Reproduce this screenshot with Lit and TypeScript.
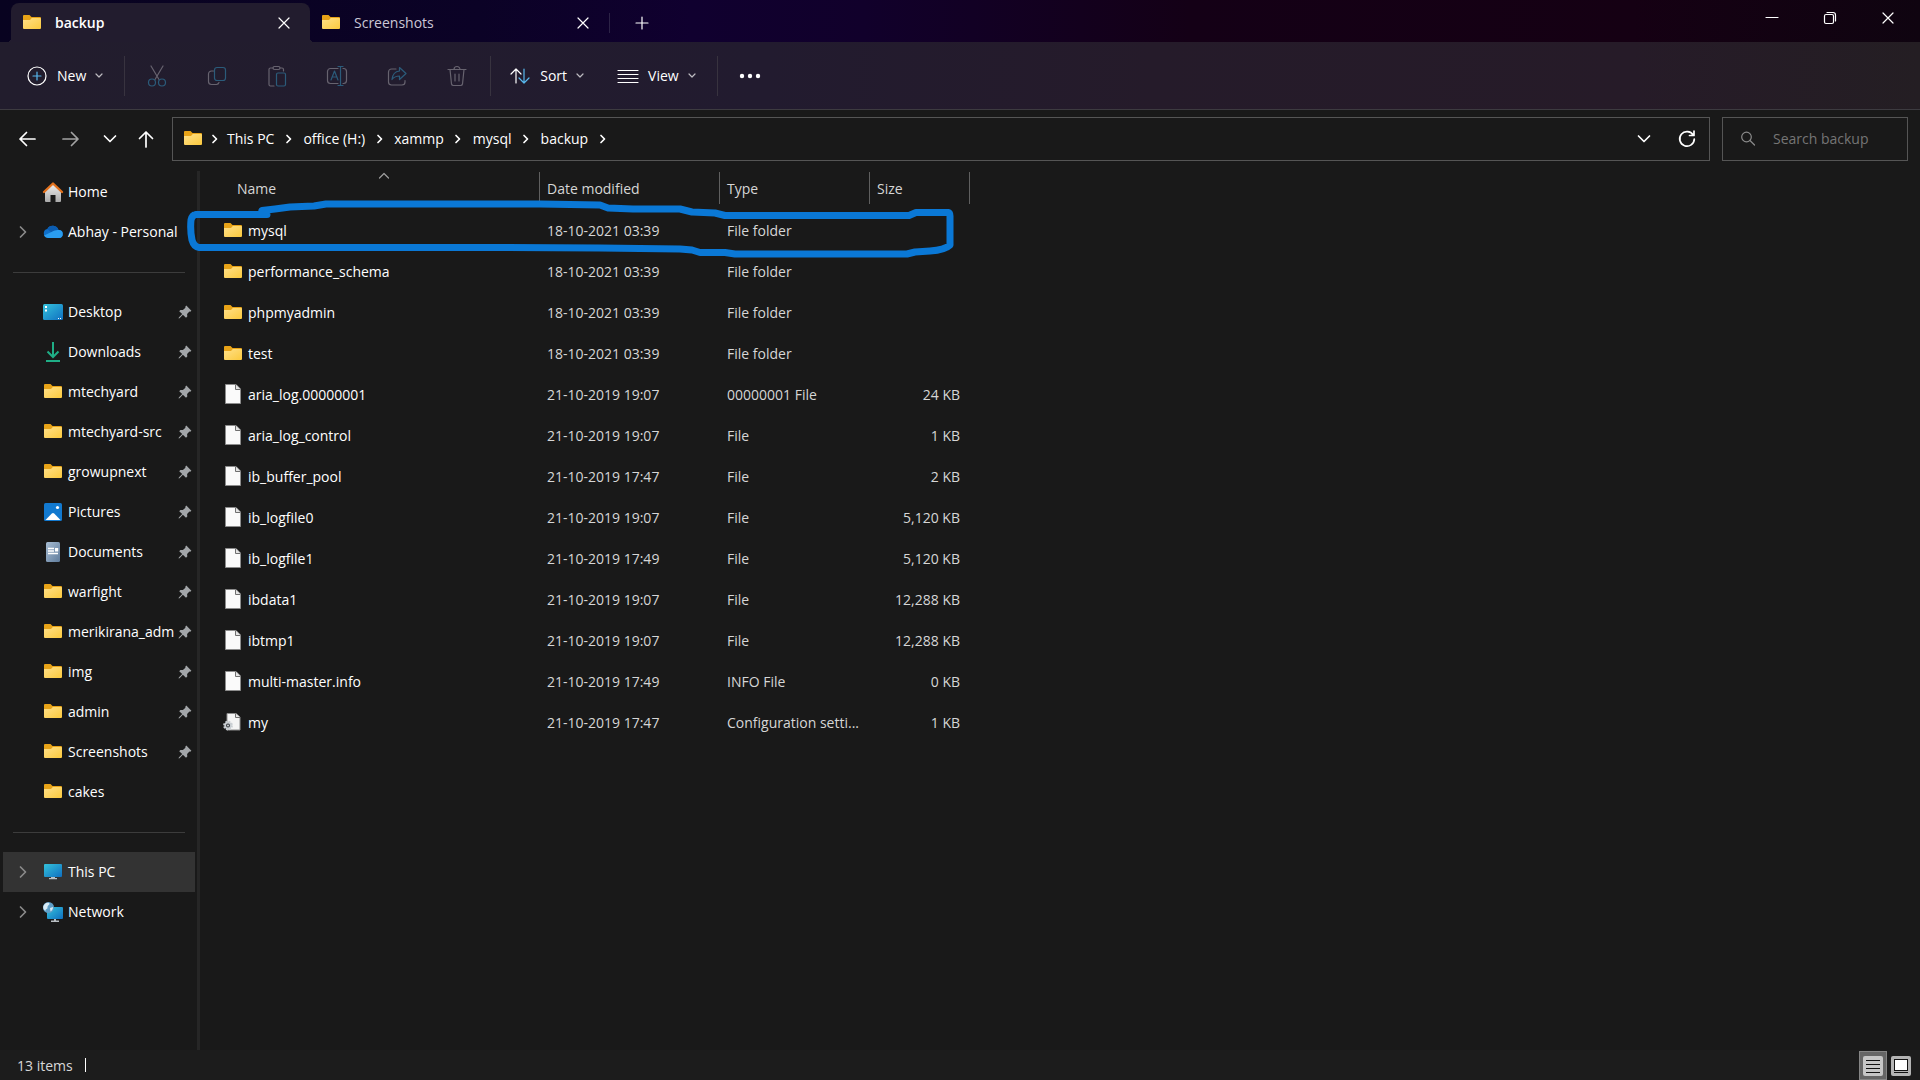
import { LitElement, html, css, svg, nothing, TemplateResult } from "lit";
import { customElement } from "lit/decorators.js";

interface Place {
  icon: string;
  label: string;
  pinned?: boolean;
  expandable?: boolean;
  selected?: boolean;
}

interface Entry {
  icon: string;
  name: string;
  modified: string;
  type: string;
  size: string;
}

const PLACES: Place[][] = [
  [
    { icon: "home", label: "Home" },
    { icon: "cloud", label: "Abhay - Personal", expandable: true },
  ],
  [
    { icon: "desktop", label: "Desktop", pinned: true },
    { icon: "downloads", label: "Downloads", pinned: true },
    { icon: "folder", label: "mtechyard", pinned: true },
    { icon: "folder", label: "mtechyard-src", pinned: true },
    { icon: "folder", label: "growupnext", pinned: true },
    { icon: "pictures", label: "Pictures", pinned: true },
    { icon: "documents", label: "Documents", pinned: true },
    { icon: "folder", label: "warfight", pinned: true },
    { icon: "folder", label: "merikirana_adm", pinned: true },
    { icon: "folder", label: "img", pinned: true },
    { icon: "folder", label: "admin", pinned: true },
    { icon: "folder", label: "Screenshots", pinned: true },
    { icon: "folder", label: "cakes" },
  ],
  [
    { icon: "pc", label: "This PC", expandable: true, selected: true },
    { icon: "network", label: "Network", expandable: true },
  ],
];

const entry = (icon: string, name: string, modified: string, type: string, size = ""): Entry => ({
  icon, name, modified, type, size,
});

const ENTRIES: Entry[] = [
  entry("folder", "mysql", "18-10-2021 03:39", "File folder"),
  entry("folder", "performance_schema", "18-10-2021 03:39", "File folder"),
  entry("folder", "phpmyadmin", "18-10-2021 03:39", "File folder"),
  entry("folder", "test", "18-10-2021 03:39", "File folder"),
  entry("file", "aria_log.00000001", "21-10-2019 19:07", "00000001 File", "24 KB"),
  entry("file", "aria_log_control", "21-10-2019 19:07", "File", "1 KB"),
  entry("file", "ib_buffer_pool", "21-10-2019 17:47", "File", "2 KB"),
  entry("file", "ib_logfile0", "21-10-2019 19:07", "File", "5,120 KB"),
  entry("file", "ib_logfile1", "21-10-2019 17:49", "File", "5,120 KB"),
  entry("file", "ibdata1", "21-10-2019 19:07", "File", "12,288 KB"),
  entry("file", "ibtmp1", "21-10-2019 19:07", "File", "12,288 KB"),
  entry("file", "multi-master.info", "21-10-2019 17:49", "INFO File", "0 KB"),
  entry("config", "my", "21-10-2019 17:47", "Configuration setti...", "1 KB"),
];

const CRUMBS = ["This PC", "office (H:)", "xammp", "mysql", "backup"];

const frame = (w: number, h: number, body: TemplateResult, cls = "line") => html`
  <svg class=${cls} width=${w} height=${h} viewBox="0 0 ${w} ${h}" aria-hidden="true">${body}</svg>
`;

const chevronRight = frame(8, 12, svg`<path d="M2 2.500l3.500 3.500L2 9.500" />`, "line bold");
const chevronTree = frame(8, 12, svg`<path d="M1.500 1l5 5-5 5" />`, "line bold");
const chevronDown = (w: number) =>
  w < 10
    ? frame(8, 6, svg`<path d="M1 1l3 3 3-3" />`, "line faint")
    : frame(14, 8, svg`<path d="M1.500 1l5.500 5.500 5.500-5.500" />`, "line bold");

/** Coloured icons of places and files, each drawn in a 20 by 20 box. */
const PICTURES: Record<string, TemplateResult> = {
  folder: svg`
    <path d="M1 3a1 1 0 0 1 1-1h5.500l2 2H18a1 1 0 0 1 1 1v5H1z" fill="#e8a317" />
    <path d="M1 7h7l1.800-2H18a1 1 0 0 1 1 1v9a1 1 0 0 1-1 1H2a1 1 0 0 1-1-1z" fill="url(#g-folder)" />`,
  home: svg`
    <path d="M2 9.500L10 2l8 7.500V19a1 1 0 0 1-1 1h-4.500v-7h-5v7H3a1 1 0 0 1-1-1z" fill="url(#g-home)" />
    <path d="M1 10L10 1.500 19 10" fill="none" stroke="#e2711d" stroke-width="2.400" stroke-linecap="round" stroke-linejoin="round" />`,
  cloud: svg`
    <path d="M5 16a4.500 4.500 0 0 1-.6-8.900A6 6 0 0 1 15.500 8 4 4 0 0 1 16 16z" fill="#0f6fc9" />
    <path d="M4.400 7.100A6 6 0 0 1 15.500 8L9.500 11.500z" fill="#0b5cb0" />
    <path d="M1 13.500L9 9.700c2-.9 4-1.900 6.500-1.700A4 4 0 0 1 16 16H5a4.500 4.500 0 0 1-4-2.500z" fill="#2a9df0" />`,
  desktop: svg`
    <rect x="0" y="2" width="20" height="16" rx="1.500" fill="url(#g-screen)" />
    <path d="M2 4h2v2H2zM2 7.500h2v2H2zM15 16h1v1h-1zM17 16h1v1h-1z" fill="#fff" />`,
  downloads: svg`
    <path d="M10 0v14.500M4.500 9.500L10 15 15.500 9.500" fill="none" stroke="#1fae86" stroke-width="2" />
    <path d="M3 19h14" stroke="#1fae86" stroke-width="2" />`,
  pictures: svg`
    <rect x="1" y="1" width="18" height="18" rx="1.500" fill="#1279cf" />
    <path d="M2.500 18L8.800 11.600a1.700 1.700 0 0 1 2.400 0L17.500 18z" fill="#fff" />
    <circle cx="14.500" cy="5.500" r="1.600" fill="#fff" />`,
  documents: svg`
    <rect x="3" y="0" width="14" height="20" rx="1.500" fill="url(#g-doc)" />
    <path d="M5 6.500h6M5 9h6M5 11.500h10" stroke="#fff" stroke-width="1.400" />
    <rect x="12" y="6" width="3.200" height="3.500" fill="#fff" />`,
  pc: svg`
    <rect x="1" y="2" width="18" height="13" rx="1" fill="url(#g-screen)" />
    <path d="M8 15h4v1h2v1.200H6V16h2z" fill="#b9bfc4" />`,
  network: svg`
    <rect x="4" y="5" width="16" height="12" rx="1" fill="url(#g-screen)" />
    <path d="M11 17h2v1.500h3V20H8v-1.500h3z" fill="#b9bfc4" />
    <circle cx="5.500" cy="5.500" r="5.500" fill="#5f9fc8" />
    <path d="M1 3c2-3 5-2.500 5.500-1.500S4 4 4.500 5.500 2 7 2.500 9C0 7.500-.5 5 1 3zM7 6l3-1c0 2-1 4-2.500 4.500z" fill="#d9ecf7" />`,
  file: svg`
    <path d="M2.500-.5h10.500L17.500 4v14.500h-15z" fill="#fafafa" stroke="#8c8c8c" />
    <path d="M12.500-.5V4.500H17.500" fill="#e4e4e4" stroke="#6f6f6f" />`,
  config: svg`
    <path d="M4 .5h9L17 4v13H4z" fill="#f4f4f4" stroke="#8c8c8c" />
    <path d="M12.500.5V4.500H17" fill="#e4e4e4" stroke="#6f6f6f" />
    <circle cx="5" cy="12.500" r="3.700" fill="#c9ced2" stroke="#c9ced2" stroke-width="2.400" stroke-dasharray="1.700 1.200" />
    <circle cx="5" cy="12.500" r="2" fill="#33383c" /><circle cx="5" cy="12.500" r=".9" fill="#dfe3e6" />`,
};

const picture = (name: string) => frame(20, 20, PICTURES[name], "picture");

const pin = frame(14, 14, svg`
  <path d="M8.300.6L13.400 5.700l-1.200 1-.8-.1-2.300 2.500.2 2.500-1.300 1.200L4.900 9.800 1.500 13.200l-.9.200.2-.9L4.200 9.100 1.200 6.200l1.200-1.300 2.500.2L7.400 2.700l-.1-.9z" fill="#a3a6a9" />`, "picture");

const DEFS = svg`
  <defs>
    <linearGradient id="g-folder" x1="0" y1="0" x2="1" y2="1">
      <stop offset="0" stop-color="#ffe08a" /><stop offset="1" stop-color="#fbc93d" />
    </linearGradient>
    <linearGradient id="g-home" x1="0" y1="0" x2="0" y2="1">
      <stop offset="0" stop-color="#eeeeee" /><stop offset="1" stop-color="#a9a9a9" />
    </linearGradient>
    <linearGradient id="g-screen" x1="0" y1="0" x2="1" y2="1">
      <stop offset="0" stop-color="#35c3dc" /><stop offset="1" stop-color="#0f6fc0" />
    </linearGradient>
    <linearGradient id="g-doc" x1="0" y1="0" x2="1" y2="1">
      <stop offset="0" stop-color="#a8bdd3" /><stop offset="1" stop-color="#5f7c9c" />
    </linearGradient>
  </defs>`;

/** Outline icons of the command bar. */
const COMMANDS: Array<[string, TemplateResult]> = [
  ["Cut", svg`<path d="M5 1l8 13.500M17 1L9 14.500" /><g class="tint"><circle cx="6" cy="17.500" r="3.500" /><circle cx="16" cy="17.500" r="3.500" /></g>`],
  ["Copy", svg`<path d="M7.500 6H5.500a3 3 0 0 0-3 3v7.500a3 3 0 0 0 3 3h5a3 3 0 0 0 2.500-2" /><rect class="tint" x="8.500" y="2.500" width="11" height="13" rx="2.500" />`],
  ["Paste", svg`<path d="M7 3H4.500a1.500 1.500 0 0 0-1.500 1.500v15A1.500 1.500 0 0 0 4.500 21H8M14 3h2a1.500 1.500 0 0 1 1.500 1.500V6" /><rect x="7" y="1.500" width="7" height="3" rx="1.500" /><rect class="tint" x="10.500" y="8" width="9" height="13" rx="1.500" />`],
  ["Rename", svg`<path d="M12 3.500H4.500a3 3 0 0 0-3 3v9a3 3 0 0 0 3 3H12M17 3.500h.5a3 3 0 0 1 3 3v9a3 3 0 0 1-3 3H17" /><g class="tint"><path d="M5 15l3.500-9L12 15M6.200 12h4.600" /><path d="M12 1.500h5M14.500 1.500v19M12 20.500h5" /></g>`],
  ["Share", svg`<path d="M10 4H5.500a3 3 0 0 0-3 3v10a3 3 0 0 0 3 3H16a3 3 0 0 0 3-3v-1.500" /><path class="tint" d="M13.500 2.500l6.500 6-6.500 6V11c-3.500 0-5.500 1-7.500 3.500C6.500 9.500 9 6.500 13.500 6z" />`],
  ["Delete", svg`<path d="M2 4.500h18M8 4.500a3 3 0 0 1 6 0M4 4.500l1.500 14.500a2 2 0 0 0 2 1.500h7a2 2 0 0 0 2-1.500L18 4.500M9 9v7M13 9v7" />`],
];

const ICONS = {
  close: frame(12, 12, svg`<path d="M1 1l10 10M11 1L1 11" />`),
  plus: frame(14, 14, svg`<path d="M7 1v12M1 7h12" />`),
  minimize: frame(12, 12, svg`<path d="M0 8.500h12" />`),
  restore: frame(14, 14, svg`<rect x="1.500" y="3.500" width="9" height="9" rx="1.500" /><path d="M4 1.500h6a2.500 2.500 0 0 1 2.500 2.500v6" />`),
  back: frame(18, 16, svg`<path d="M17 8H2M8.500 1.500L2 8l6.500 6.500" />`, "line bold"),
  forward: frame(18, 16, svg`<path d="M1 8h15M9.500 1.500L16 8l-6.500 6.500" />`, "line bold dim"),
  up: frame(16, 18, svg`<path d="M8 17V2M1.500 8.500L8 2l6.500 6.500" />`, "line bold"),
  refresh: frame(18, 18, svg`<path d="M15.200 5A7.300 7.300 0 1 0 16.300 9M16 1v4.500h-4.500" />`, "line bold"),
  search: frame(16, 16, svg`<circle cx="6.500" cy="6" r="4.800" /><path d="M10 9.500l4.500 4.500" />`),
  create: frame(20, 20, svg`<circle cx="10" cy="10" r="9" /><path class="accent" d="M10 6v8M6 10h8" />`),
  sort: frame(20, 18, svg`<path d="M6 16V2M1 7l5-5 5 5" /><path class="accent" d="M14 2v14M9 11l5 5 5-5" />`),
  view: frame(20, 14, svg`<path d="M0 1.500h20M0 5.500h20M0 9.500h20M0 13.500h20" />`),
  more: frame(22, 6, svg`<g fill="#fff" stroke="none"><circle cx="3" cy="3" r="2.200" /><circle cx="11" cy="3" r="2.200" /><circle cx="19" cy="3" r="2.200" /></g>`),
  details: frame(20, 20, svg`<rect width="20" height="20" rx="2" fill="#c6c6c6" /><path d="M3 4.500h14M3 8.500h14M3 12.500h14M3 16.500h14" stroke="#111" />`, "picture"),
  thumbs: frame(20, 20, svg`<rect width="20" height="20" rx="2" fill="#b4b4b4" /><rect x="3.500" y="3.500" width="13" height="11" fill="#fff" stroke="#111" /><path d="M3 16.500h14" stroke="#111" />`, "picture"),
  caret: frame(12, 7, svg`<path d="M1.500 6L6 1.500 10.500 6" />`, "line faint"),
};

@customElement("app-root")
export class AppRoot extends LitElement {
  static styles = css`
    :host {
      display: flex;
      flex-direction: column;
      min-height: 100vh;
      background: #191919;
      color: #fff;
      font: 14px/20px "Open Sans", "Noto Sans", sans-serif;
    }
    * { box-sizing: border-box; }
    button, input {
      font: inherit;
      color: inherit;
      background: none;
      border: 0;
      padding: 0;
      margin: 0;
    }
    button { display: flex; align-items: center; justify-content: center; flex: none; }
    a { color: inherit; text-decoration: none; }
    ul, ol { list-style: none; margin: 0; padding: 0; }
    svg { display: block; flex: none; overflow: visible; }
    .line { fill: none; stroke: currentColor; stroke-width: 1.2; stroke-linecap: round; stroke-linejoin: round; }
    .bold { stroke-width: 1.7; }
    .faint { opacity: 0.7; }
    .dim { opacity: 0.6; }
    .accent { stroke: #58b8ee; }
    .defs { position: absolute; width: 0; height: 0; }

    .tabs {
      display: flex;
      align-items: flex-end;
      height: 42px;
      padding-left: 11px;
      background: linear-gradient(90deg, #080320 0%, #0b0226 25%, #10002f 36%, #11002b 45%, #140016 62%, #150013 85%, #0f0410 100%);
    }
    .tab { display: flex; align-items: center; height: 39px; width: 299px; padding: 0 10px 0 11px; color: #cbc7d6; }
    .tab.active { position: relative; background: #221c2e; border-radius: 8px 8px 0 0; color: #fff; font-weight: 600; }
    .tab.active::before, .tab.active::after {
      content: "";
      position: absolute;
      bottom: 0;
      width: 4px;
      height: 4px;
      background: radial-gradient(circle at 0 0, transparent 4px, #221c2e 4px);
    }
    .tab.active::before { right: 100%; }
    .tab.active::after { left: 100%; background: radial-gradient(circle at 100% 0, transparent 4px, #221c2e 4px); }
    .tab-name { flex: 1; justify-content: flex-start; gap: 13px; height: 38px; }
    .tab-close { width: 32px; height: 32px; color: #fff; }
    .tab-add { width: 64px; height: 38px; }
    .tab-rule { width: 1px; height: 20px; margin-bottom: 9px; background: #2c2346; }
    .window { display: flex; align-self: flex-start; margin-left: auto; padding-right: 3px; }
    .window button { width: 58px; height: 36px; }
    .window button:first-child { height: 30px; }

    .commands {
      display: flex;
      align-items: center;
      height: 68px;
      padding-left: 15px;
      background: linear-gradient(90deg, #221d2d 0%, #221b2f 40%, #251b2a 60%, #261b28 85%, #241e23 100%);
      border-bottom: 1px solid #3d3b40;
    }
    .command { height: 40px; padding: 0 12px; gap: 10px; }
    .command .faint { margin-left: -1px; }
    .command.icon { width: 60px; padding: 0; color: #67636f; }
    .icon .tint { stroke: #2b5b7a; }
    .rule { width: 1px; height: 40px; margin: 0 2px 0 9px; background: #38333f; }
    .rule.end { margin: 0 7px 0 3px; }
    .command.view { margin-left: 10px; }
    .more { width: 60px; height: 40px; }

    .address { display: flex; align-items: center; gap: 12px; padding: 7px 12px 10px 5px; }
    .history { display: flex; width: 155px; align-items: center; }
    .history button { width: 44px; height: 44px; }
    .history .recent { width: 33px; }
    .history .up { width: 40px; }
    .path { display: flex; align-items: center; flex: 1; min-width: 0; height: 44px; padding: 0 1px 0 10px; border: 1px solid #555; }
    .crumbs { display: flex; flex: 1; }
    .crumbs li { display: flex; align-items: center; }
    .crumbs button { width: 29px; height: 32px; }
    .crumbs .root { width: 24px; }
    .path-action { width: 43px; height: 42px; }
    .search { display: flex; align-items: center; gap: 17px; width: 186px; height: 44px; padding-left: 17px; border: 1px solid #555; color: #8b8b8b; }
    .search input { width: 100%; min-width: 0; outline: 0; }
    .search input::placeholder { color: #757575; opacity: 1; }

    .body { display: flex; flex: 1; }
    .places { width: 200px; padding: 1px 2px 0 3px; border-right: 3px solid #262626; }
    .places li { display: flex; align-items: center; height: 40px; padding-right: 3px; }
    .places li.selected { background: #333; }
    .places .expand { width: 40px; height: 40px; color: #8a8a8a; }
    .places a { display: flex; align-items: center; gap: 5px; flex: 1; min-width: 0; white-space: nowrap; }
    .places .pinned a { overflow: hidden; }
    .divider { margin: 20px 10px 19px; border: 0; border-top: 1px solid #3c3c3c; }

    .files { position: relative; flex: 1; min-width: 0; }
    table { border-collapse: collapse; table-layout: fixed; width: 770px; color: #d6d6d6; }
    .col-name { width: 340px; }
    .col-date { width: 180px; }
    .col-type { width: 150px; }
    .col-size { width: 100px; }
    th { padding: 1px 0 6px; font-weight: 400; text-align: left; }
    .head { display: flex; width: 100%; height: 32px; padding: 2px 0 0 7px; border-right: 1px solid #5f5f5f; justify-content: flex-start; position: relative; }
    .head.first { padding-left: 37px; }
    .caret { position: absolute; top: 0; left: 178px; }
    td { height: 41px; padding: 0 0 0 7px; white-space: nowrap; }
    td.name { padding-left: 23px; color: #fff; }
    td.name a { display: flex; align-items: center; gap: 5px; }
    td.size { padding: 0 10px 0 0; text-align: right; }
    .marker { position: absolute; left: -14px; top: 24px; pointer-events: none; fill: none; stroke: #0a78d6; stroke-width: 7; stroke-linecap: round; stroke-linejoin: round; }

    .status { display: flex; align-items: center; height: 30px; padding: 0 5px 0 17px; background: #1c1c1c; color: #d8d8d8; }
    .status-text { padding-top: 2px; }
    .status-rule { width: 1px; height: 14px; margin-left: 12px; background: #fff; }
    .layouts { display: flex; align-self: flex-end; margin-left: auto; }
    .layouts button { width: 28px; height: 29px; }
    .layouts .on { background: #666; border: 1px solid #858585; }
  `;

  private place(p: Place) {
    return html`
      <li class="${p.pinned ? "pinned" : ""} ${p.selected ? "selected" : ""}">
        ${p.expandable
          ? html`<button class="expand" aria-label="Expand ${p.label}">${chevronTree}</button>`
          : html`<span class="expand"></span>`}
        <a href="#">${picture(p.icon)}<span>${p.label}</span></a>
        ${p.pinned ? pin : nothing}
      </li>`;
  }

  private tab(name: string, active: boolean) {
    return html`
      <div class="tab ${active ? "active" : ""}">
        <button class="tab-name" role="tab" aria-selected=${active}>${picture("folder")}<span>${name}</span></button>
        <button class="tab-close" aria-label="Close ${name}">${ICONS.close}</button>
      </div>`;
  }

  render() {
    return html`
      <svg class="defs" aria-hidden="true">${DEFS}</svg>

      <header class="tabs">
        ${this.tab("backup", true)} ${this.tab("Screenshots", false)}
        <span class="tab-rule"></span>
        <button class="tab-add" aria-label="New tab">${ICONS.plus}</button>
        <div class="window">
          <button aria-label="Minimize">${ICONS.minimize}</button>
          <button aria-label="Restore">${ICONS.restore}</button>
          <button aria-label="Close window">${ICONS.close}</button>
        </div>
      </header>

      <div class="commands" role="toolbar" aria-label="Commands">
        <button class="command">${ICONS.create}<span>New</span>${chevronDown(8)}</button>
        <span class="rule"></span>
        ${COMMANDS.map(([label, shape]) => html`
          <button class="command icon" aria-label=${label}>${frame(22, 22, shape)}</button>`)}
        <span class="rule end"></span>
        <button class="command sort">${ICONS.sort}<span>Sort</span>${chevronDown(8)}</button>
        <button class="command view">${ICONS.view}<span>View</span>${chevronDown(8)}</button>
        <span class="rule"></span>
        <button class="more" aria-label="See more">${ICONS.more}</button>
      </div>

      <div class="address">
        <div class="history">
          <button aria-label="Back">${ICONS.back}</button>
          <button aria-label="Forward">${ICONS.forward}</button>
          <button class="recent" aria-label="Recent locations">${chevronDown(14)}</button>
          <button class="up" aria-label="Up">${ICONS.up}</button>
        </div>
        <nav class="path" aria-label="Path">
          ${picture("folder")}
          <ol class="crumbs">
            <li><button class="root" aria-label="Root folders">${chevronRight}</button></li>
            ${CRUMBS.map((c) => html`
              <li><a href="#">${c}</a><button aria-label="Folders in ${c}">${chevronRight}</button></li>`)}
          </ol>
          <button class="path-action" aria-label="Previous locations">${chevronDown(14)}</button>
          <button class="path-action" aria-label="Refresh">${ICONS.refresh}</button>
        </nav>
        <label class="search">${ICONS.search}<input type="text" aria-label="Search backup" placeholder="Search backup" /></label>
      </div>

      <div class="body">
        <nav class="places" aria-label="Places">
          ${PLACES.map((group, i) => html`
            ${i ? html`<hr class="divider" />` : nothing}
            <ul>${group.map((p) => this.place(p))}</ul>`)}
        </nav>
        <main class="files">
          <table>
            <colgroup>
              <col class="col-name" /><col class="col-date" /><col class="col-type" /><col class="col-size" />
            </colgroup>
            <thead>
              <tr>
                <th aria-sort="ascending"><button class="head first">Name<span class="caret">${ICONS.caret}</span></button></th>
                <th><button class="head">Date modified</button></th>
                <th><button class="head">Type</button></th>
                <th><button class="head">Size</button></th>
              </tr>
            </thead>
            <tbody>
              ${ENTRIES.map((e) => html`
                <tr>
                  <td class="name"><a href="#">${picture(e.icon)}<span>${e.name}</span></a></td>
                  <td>${e.modified}</td>
                  <td>${e.type}</td>
                  <td class="size">${e.size}</td>
                </tr>`)}
            </tbody>
          </table>
          <svg class="marker" width="776" height="68" viewBox="186 195 776 68" aria-hidden="true">
            <path d="M196 214.500H267L262 210.500 275 209 290 207 314 206 326 204H540L600 205 608 208 633 209H680L692 212 715 213 725 215.500H909L916 212.500H948Q950 213 950 216V245Q945 250 930 251L915 252 907 254H735L725 252.500H700L692 250 680 249 600 248 500 247.500H199Q194 247 192 240 190 230 191 220 192 215 196 214.500" />
          </svg>
        </main>
      </div>

      <footer class="status">
        <span class="status-text">13 items</span><span class="status-rule"></span>
        <div class="layouts">
          <button class="on" aria-label="Details" aria-pressed="true">${ICONS.details}</button>
          <button aria-label="Large thumbnails" aria-pressed="false">${ICONS.thumbs}</button>
        </div>
      </footer>
    `;
  }
}
